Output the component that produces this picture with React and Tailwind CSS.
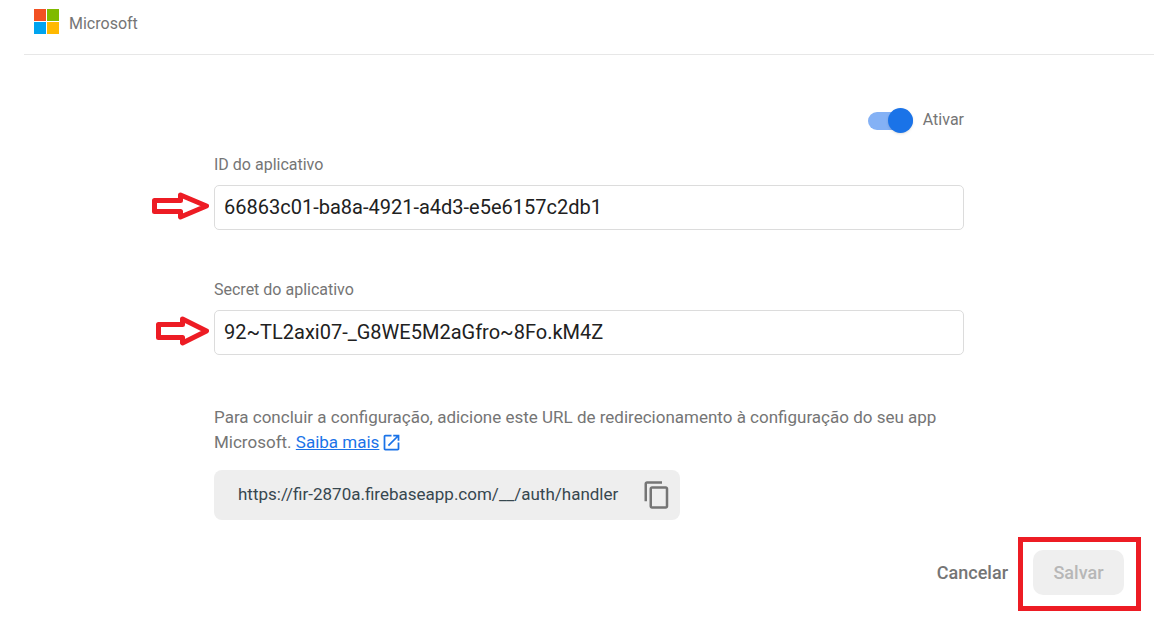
import { useState } from "react";

function MicrosoftLogo() {
  return (
    <svg className="h-[25px] w-[25px]" viewBox="0 0 25 25" aria-hidden="true" shapeRendering="crispEdges">
      <path fill="#f25022" d="M0 0h12v12H0z" />
      <path fill="#7fba00" d="M13 0h12v12H13z" />
      <path fill="#00a4ef" d="M0 13h12v12H0z" />
      <path fill="#ffb900" d="M13 13h12v12H13z" />
    </svg>
  );
}

function Toggle({ checked, onChange }) {
  return (
    <label className="flex h-[25px] cursor-pointer items-center gap-2.5 text-base text-[#757575]">
      <span className="relative flex h-[25px] w-[45px] items-center">
        <input
          type="checkbox"
          role="switch"
          checked={checked}
          onChange={(e) => onChange(e.target.checked)}
          className="peer h-[18px] w-full cursor-pointer appearance-none rounded-full bg-[#bdbdbd] checked:bg-[#84b1f5]"
        />
        <span className="pointer-events-none absolute left-0 top-0 h-[25px] w-[25px] rounded-full bg-white shadow-sm peer-checked:left-5 peer-checked:bg-[#1a73e8]" />
      </span>
      <span className="pb-0.5">Ativar</span>
    </label>
  );
}

function Field({ id, label, value, onChange, arrow }) {
  return (
    <div className="flex flex-col">
      <label htmlFor={id} className="mb-2 text-base leading-6 text-[#757575]">
        {label}
      </label>
      <div className="relative">
        {arrow}
        <input
          id={id}
          type="text"
          value={value}
          onChange={(e) => onChange(e.target.value)}
          className="h-[45px] w-full rounded-[5px] border border-[#dcdcdc] bg-white px-[9px] pb-0.5 text-xl text-[#212121] outline-none focus:border-[#1a73e8]"
        />
      </div>
    </div>
  );
}

export default function App() {
  const [enabled, setEnabled] = useState(true);
  const [appId, setAppId] = useState("66863c01-ba8a-4921-a4d3-e5e6157c2db1");
  const [secret, setSecret] = useState("92~TL2axi07-_G8WE5M2aGfro~8Fo.kM4Z");
  const url = "https://fir-2870a.firebaseapp.com/__/auth/handler";

  return (
    <div className="bg-white pl-6 pr-[17px] font-['Roboto',sans-serif] text-[#757575]">
      <header className="flex h-[55px] items-center gap-2.5 border-b border-[#e7e7e7] pb-[11px] pl-2.5">
        <MicrosoftLogo />
        <h1 className="pt-1 text-base">Microsoft</h1>
      </header>

      <main className="mx-auto max-w-[750px] pt-[53px]">
        <div className="flex justify-end">
          <Toggle checked={enabled} onChange={setEnabled} />
        </div>

        <div className="mt-5 flex flex-col gap-12">
          <Field
            id="app-id"
            label="ID do aplicativo"
            value={appId}
            onChange={setAppId}
            arrow={
              <svg className="absolute right-full top-[7px] mr-[5px] h-7 w-[57px]" viewBox="0 0 57 28" aria-hidden="true">
                <path d="M2.5 8.5H28.5V3L54.5 14L28.5 25V19.5H2.5Z" fill="#fff" stroke="#ed1c24" strokeWidth="5" strokeLinejoin="round" />
              </svg>
            }
          />
          <Field
            id="app-secret"
            label="Secret do aplicativo"
            value={secret}
            onChange={setSecret}
            arrow={
              <svg className="absolute right-full top-1.5 mr-[5px] h-[30px] w-[53px]" viewBox="0 0 53 30" aria-hidden="true">
                <path d="M2.5 8.5H26.5V3L50.5 15L26.5 27V21.5H2.5Z" fill="#fff" stroke="#ed1c24" strokeWidth="5" strokeLinejoin="round" />
              </svg>
            }
          />
        </div>

        <p className="mt-[50px] text-[17px] leading-[25px]">
          Para concluir a configuração, adicione este URL de redirecionamento à configuração do seu app Microsoft.{" "}
          <a href="#saiba-mais" className="text-[#1a73e8] underline">
            Saiba mais
          </a>
          <svg className="ml-0.5 inline-block h-[21px] w-[21px] align-[-5px] text-[#1a73e8]" viewBox="0 0 24 24" fill="currentColor" aria-hidden="true">
            <path d="M19 19H5V5h7V3H5c-1.11 0-2 .9-2 2v14c0 1.1.89 2 2 2h14c1.1 0 2-.9 2-2v-7h-2v7zM14 3v2h3.59l-9.83 9.83 1.41 1.41L19 6.41V10h2V3h-7z" />
          </svg>
        </p>

        <div className="mt-[15px] flex h-[50px] w-[466px] max-w-full items-center justify-between rounded-lg bg-[#eeeeee] pl-6 pr-2 text-[17px] text-[#37474f]">
          <span>{url}</span>
          <button
            type="button"
            aria-label="Copiar URL"
            onClick={() => navigator.clipboard?.writeText(url)}
            className="cursor-pointer text-[#757575]"
          >
            <svg className="h-[30px] w-[30px]" viewBox="0 0 24 24" fill="currentColor" aria-hidden="true">
              <path d="M16 1H4c-1.1 0-2 .9-2 2v14h2V3h12V1zm3 4H8c-1.1 0-2 .9-2 2v14c0 1.1.9 2 2 2h11c1.1 0 2-.9 2-2V7c0-1.1-.9-2-2-2zm0 16H8V7h11v14z" />
            </svg>
          </button>
        </div>
      </main>

      <footer className="mt-[17px] flex items-center justify-end gap-2.5 pr-[13px] text-lg font-medium">
        <button type="button" className="cursor-pointer pb-0.5 text-[#757575]">
          Cancelar
        </button>
        <div className="border-[5px] border-[#ed1c24] pb-[11px] pl-2.5 pr-3 pt-2">
          <button type="button" disabled className="h-[45px] min-w-[91px] rounded-[10px] bg-[#efefef] px-5 text-[#b7b7b7]">
            Salvar
          </button>
        </div>
      </footer>
    </div>
  );
}
